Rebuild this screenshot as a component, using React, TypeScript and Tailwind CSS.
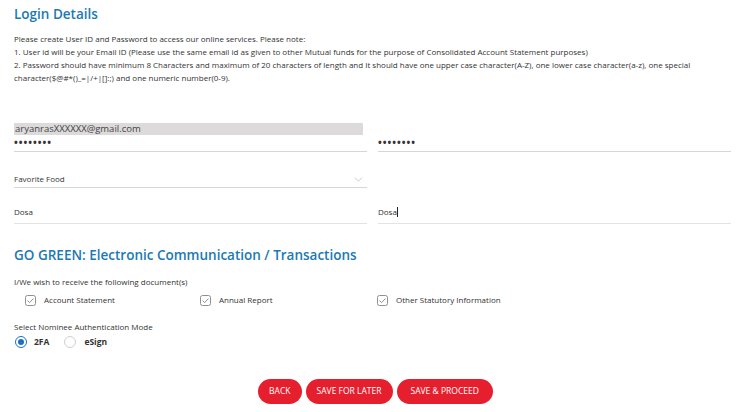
import { ChevronDown } from 'lucide-react';

function CheckItem({ label }: { label: string }) {
  return (
    <div className="flex items-center gap-[8px]">
      <svg width="11" height="11" viewBox="0 0 11 11" className="shrink-0">
        <rect x="0.5" y="0.5" width="10" height="10" rx="2" fill="white" stroke="#8f8f8f" />
        <path d="M2.6 5.6 L4.6 7.6 L8.4 3.6" fill="none" stroke="#8f8f8f" strokeWidth="1" />
      </svg>
      <span>{label}</span>
    </div>
  );
}

export default function App() {
  return (
    <div
      className="w-[745px] h-[412px] bg-white px-[14px] text-[#333] overflow-hidden"
      style={{ fontFamily: "'Open Sans', 'Noto Sans', sans-serif" }}
    >
      {/* Login details */}
      <h1 className="pt-[4px] text-[13.5px] font-semibold text-[#1b79b4] leading-[20px]">Login Details</h1>

      <div className="mt-[8px] text-[8px] leading-[13px] whitespace-nowrap">
        <p>Please create User ID and Password to access our online services. Please note:</p>
        <p>1. User id will be your Email ID (Please use the same email id as given to other Mutual funds for the purpose of Consolidated Account Statement purposes)</p>
        <p>
          2. Password should have minimum 8 Characters and maximum of 20 characters of length and It should have one upper case character(A-Z), one lower case character(a-z), one special
          <br />
          character($@#*()_=|/+|[]{}:;) and one numeric number(0-9).
        </p>
      </div>

      <div className="mt-[39px] grid grid-cols-2 gap-x-[11px] text-[8px]">
        {/* email + password */}
        <div>
          <div className="w-[349px] h-[12px] bg-[#dcdada] text-[9.5px] leading-[12px] pl-[1px] text-[#444]">
            aryanrasXXXXXX@gmail.com
          </div>
          <div className="h-[17px] pt-[2px] text-[10px] font-bold leading-[10px] tracking-[1px] border-b border-[#d6d6d6]">••••••••</div>
        </div>
        <div className="pt-[12px]">
          <div className="h-[17px] pt-[2px] text-[10px] font-bold leading-[10px] tracking-[1px] border-b border-[#d6d6d6]">••••••••</div>
        </div>

        {/* favorite food */}
        <div className="mt-[19px] h-[17px] flex items-center justify-between border-b border-[#d6d6d6]">
          <span>Favorite Food</span>
          <ChevronDown size={13} strokeWidth={1} className="text-[#9a9a9a] mr-[2px]" />
        </div>
        <div />

        {/* answer */}
        <div className="mt-[13px] h-[23px] flex items-center border-b border-[#e3e3e3]">
          <span>Dosa</span>
        </div>
        <div className="mt-[13px] h-[23px] flex items-center border-b border-[#e3e3e3]">
          <span>Dosa</span>
          <span className="w-px h-[10px] bg-[#222] ml-[0.5px]" />
        </div>
      </div>

      {/* Go green */}
      <h2 className="mt-[21px] text-[13.5px] font-semibold text-[#1b79b4] leading-[20px]">
        GO GREEN: Electronic Communication / Transactions
      </h2>
      <p className="mt-[11px] text-[8px] leading-[12px]">I/We wish to receive the following document(s)</p>
      <div className="mt-[6px] ml-[11px] grid grid-cols-[175px_177px_1fr] text-[8px] leading-[12px]">
        <CheckItem label="Account Statement" />
        <CheckItem label="Annual Report" />
        <CheckItem label="Other Statutory Information" />
      </div>

      <p className="mt-[15px] text-[8px] leading-[12px]">Select Nominee Authentication Mode</p>
      <div className="mt-[2px] flex items-center text-[8.5px] font-bold leading-[14px]">
        <span className="w-[12px] h-[12px] rounded-full border border-[#1d6fc4] flex items-center justify-center ml-[1px]">
          <span className="w-[6px] h-[6px] rounded-full bg-[#1d6fc4]" />
        </span>
        <span className="ml-[7px]">2FA</span>
        <span className="ml-[15px] w-[12px] h-[12px] rounded-full border border-[#cfcfcf]" />
        <span className="ml-[8px]">eSign</span>
      </div>

      {/* actions */}
      <div className="mt-[30px] flex justify-center gap-[4px] pl-[6px] text-white text-[8.5px]">
        <button className="h-[25px] px-[11px] rounded-full bg-[#e51f2e]">BACK</button>
        <button className="h-[25px] px-[11px] rounded-full bg-[#e51f2e]">SAVE FOR LATER</button>
        <button className="h-[25px] px-[14px] rounded-full bg-[#e51f2e]">SAVE &amp; PROCEED</button>
      </div>
    </div>
  );
}
